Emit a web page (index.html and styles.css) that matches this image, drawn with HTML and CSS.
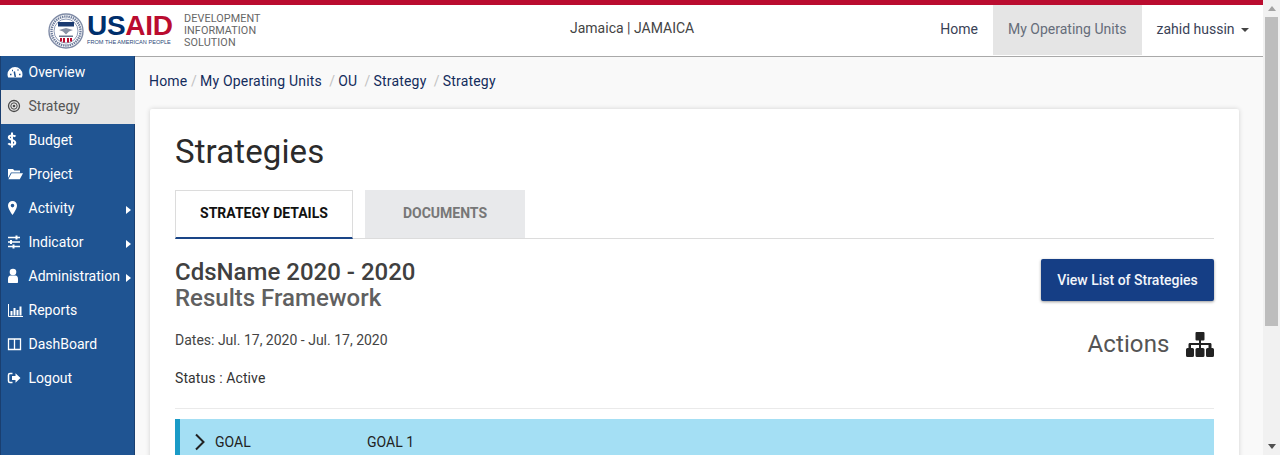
FILE: index.html
```html
<!DOCTYPE html>
<html lang="en">
<head>
<meta charset="utf-8">
<title>Strategies</title>
<link rel="stylesheet" href="styles.css">
</head>
<body>
<div class="window">
  <div class="page">
    <div class="topline"></div>
    <header class="header">
      <div class="brand">
        <svg class="seal" width="36" height="36" viewBox="0 0 36 36">
          <circle cx="18" cy="18" r="17" fill="#fff" stroke="#7f8ba6" stroke-width="1.4"/>
          <circle cx="18" cy="18" r="14.5" fill="none" stroke="#6d7c9c" stroke-width="2.4" stroke-dasharray="1.4 .8"/>
          <circle cx="18" cy="18" r="12" fill="#fff" stroke="#5f7096" stroke-width=".7"/>
          <rect x="10" y="9" width="16" height="4.500" fill="#1a3a70"/>
          <path d="M11 17l7-2 7 2-4 1.500-3 3-3-3z" fill="#8a93a6"/>
          <rect x="11" y="22.500" width="14" height="1.500" fill="#6a7892"/>
          <path fill="#ba0c2f" d="M12 25h2v3.500h-2zM15 25h2v4.500h-2zM19 25h2v4.500h-2zM22 25h2v3.500h-2z"/>
        </svg>
        <div class="wordmark">
          <div class="usaid"><span class="us">US</span><span class="aid">AID</span></div>
          <div class="tagline">FROM THE AMERICAN PEOPLE</div>
        </div>
        <div class="dis">DEVELOPMENT<br>INFORMATION<br>SOLUTION</div>
      </div>
      <div class="country">Jamaica | JAMAICA</div>
      <nav class="topnav">
        <a class="topnav-item">Home</a>
        <a class="topnav-item is-active">My Operating Units</a>
        <a class="topnav-item user">zahid hussin <span class="caret"></span></a>
      </nav>
    </header>
    <div class="body-row">
      <aside class="sidebar">
        <a class="side-item"><svg class="ico" viewBox="0 0 16 16"><path fill="#fff" d="M8 3a7.500 7.500 0 0 0-7.500 7.500c0 1 .2 2 .7 3h13.600c.5-1 .7-2 .7-3A7.500 7.500 0 0 0 8 3z"/><path stroke="#1f5492" stroke-width="1.500" d="M8.300 13 7.300 7.500M3 10.500h1.500M5 6.500h1M10.500 6h1M12 10.500h1.500"/></svg><span>Overview</span></a>
        <a class="side-item is-active"><svg class="ico" viewBox="0 0 16 16" fill="none" stroke="#4a4a4a"><circle cx="7" cy="8" r="5.500" stroke-width="1.300"/><circle cx="7" cy="8" r="3.200" stroke-width="1"/><circle cx="7" cy="8" r="1.300" fill="#4a4a4a" stroke="none"/></svg><span>Strategy</span></a>
        <a class="side-item"><svg class="ico" viewBox="0 0 16 16"><path fill="none" stroke="#fff" stroke-width="2" transform="translate(-3 0)" d="M11.500 4.500C10.500 3.300 5 2.500 4.800 5.200 4.600 8 11.300 7.700 11.300 10.700 11.300 13.500 5.500 13 4.300 11.300M8 .5v15"/></svg><span>Budget</span></a>
        <a class="side-item"><svg class="ico" viewBox="0 0 16 16"><path fill="#fff" d="M1 3h5l1.300 1.500H13V6.500H4L1 12zM4.500 7.300H16l-3.200 6H1.400z"/></svg><span>Project</span></a>
        <a class="side-item"><svg class="ico" viewBox="0 0 16 16"><path fill="#fff" fill-rule="evenodd" transform="translate(-2.500 0)" d="M8 1a4.500 4.500 0 0 0-4.500 4.500C3.500 9 8 15 8 15s4.500-6 4.500-9.500A4.500 4.500 0 0 0 8 1zm0 2.800a1.800 1.800 0 1 1 0 3.600A1.800 1.800 0 0 1 8 3.800z"/></svg><span>Activity</span><i class="arrow"></i></a>
        <a class="side-item"><svg class="ico" viewBox="0 0 16 16"><path stroke="#fff" stroke-width="1.300" d="M1 3.500h12M1 8h12M1 12.500h12"/><path fill="#fff" d="M8.500 1.500h2v4h-2zM3 6h2v4H3zM5.500 10.500h2v4h-2z"/></svg><span>Indicator</span><i class="arrow"></i></a>
        <a class="side-item"><svg class="ico" viewBox="0 0 16 16"><circle cx="6" cy="4" r="3.300" fill="#fff"/><path fill="#fff" d="M1 14v-3C1 8.800 2 7.500 3.500 7.500h5c1.500 0 2.500 1.300 2.500 3.500v3c0 .6-.4 1-1 1H2c-.6 0-1-.4-1-1z"/></svg><span>Administration</span><i class="arrow"></i></a>
        <a class="side-item"><svg class="ico" viewBox="0 0 16 16"><path fill="none" stroke="#fff" d="M1.500 2v12.500h15"/><path fill="#fff" d="M3.500 9h2v4.500h-2zM6.500 6h2v7.500h-2zM9.500 8h2v5.500h-2zM12.500 4.500h2v9h-2z"/></svg><span>Reports</span></a>
        <a class="side-item"><svg class="ico" viewBox="0 0 16 16" fill="none" stroke="#fff" stroke-width="1.300"><path d="M1.500 3h12v10.500h-12zM7.500 3v10.500"/></svg><span>DashBoard</span></a>
        <a class="side-item"><svg class="ico" viewBox="0 0 16 16"><path fill="none" stroke="#fff" stroke-width="1.500" d="M5.500 3.500H3C2 3.500 1.500 4 1.500 5v6c0 1 .5 1.500 1.500 1.500h2.500"/><path fill="#fff" d="M5 6h3.500V3.200L13.500 8l-5 4.800V10H5z"/></svg><span>Logout</span></a>
      </aside>
      <main class="main">
        <ol class="crumbs">
          <li>Home</li><li class="sep sep-first">/</li><li>My Operating Units</li><li class="sep">/</li><li>OU</li><li class="sep">/</li><li>Strategy</li><li class="sep">/</li><li>Strategy</li>
        </ol>
        <section class="card">
          <h1 class="title">Strategies</h1>
          <div class="tabs">
            <a class="tab is-active">STRATEGY DETAILS</a>
            <a class="tab">DOCUMENTS</a>
          </div>
          <div class="summary">
            <div class="summary-left">
              <h2 class="cds">CdsName 2020 - 2020</h2>
              <h3 class="rf">Results Framework</h3>
              <p class="dates">Dates: Jul. 17, 2020 - Jul. 17, 2020</p>
              <p class="status">Status : Active</p>
            </div>
            <div class="summary-right">
              <a class="btn">View List of Strategies</a>
              <div class="actions">
                <span>Actions</span>
                <svg width="28" height="25" viewBox="0 0 28 25"><path fill="#222" d="M10.500 0h7a1 1 0 0 1 1 1v6.500a1 1 0 0 1-1 1H15V11h9c1 0 1.500.5 1.500 1.500V16h1a1.500 1.500 0 0 1 1.500 1.500v6a1.500 1.500 0 0 1-1.500 1.500h-5a1.500 1.500 0 0 1-1.500-1.500v-6a1.500 1.500 0 0 1 1.500-1.500h1v-3H15v3h2a1.500 1.500 0 0 1 1.500 1.500v6a1.500 1.500 0 0 1-1.500 1.500h-6a1.500 1.500 0 0 1-1.500-1.500v-6A1.500 1.500 0 0 1 11 16h2v-3H5v3h1.500A1.500 1.500 0 0 1 8 17.500v6A1.500 1.500 0 0 1 6.500 25h-5A1.500 1.500 0 0 1 0 23.500v-6A1.500 1.500 0 0 1 1.500 16h1v-3.500C2.500 11.500 3 11 4 11h9V8.500h-2.500a1 1 0 0 1-1-1V1a1 1 0 0 1 1-1z"/></svg>
              </div>
            </div>
          </div>
          <div class="goal">
            <svg class="chev" width="12" height="18" viewBox="0 0 12 18"><path fill="none" stroke="#222" stroke-width="2" d="M2 1.500 9.500 9 2 16.500"/></svg>
            <span class="goal-label">GOAL</span>
            <span class="goal-name">GOAL 1</span>
          </div>
        </section>
      </main>
    </div>
  </div>
  <div class="scrollbar">
    <div class="sb-btn"><i class="sb-up"></i></div>
    <div class="sb-track"><div class="sb-thumb"></div></div>
    <div class="sb-btn"><i class="sb-down"></i></div>
  </div>
</div>
</body>
</html>
```

FILE: styles.css
```css
* { box-sizing: border-box; }
html, body { margin: 0; height: 100%; overflow: hidden; }
body { font-family: Roboto, "Liberation Sans", sans-serif; font-size: 14px; color: #333; background: #f9f9f9; }
a { color: inherit; text-decoration: none; }
.window { display: flex; height: 455px; }
.page { flex: 1; min-width: 0; display: flex; flex-direction: column; overflow: hidden; }

.topline { height: 5px; flex: none; background: #ba0c2f; }
.header { flex: none; height: 52px; display: flex; align-items: flex-start; background: #fff; border-bottom: 1px solid #a9a9a9; }
.brand { width: 520px; flex: none; display: flex; align-items: flex-start; padding: 7px 0 0 48px; }
.seal { flex: none; margin-top: 1px; }
.wordmark { margin-left: 3px; width: 85px; flex: none; }
.usaid { font-family: "Liberation Sans", sans-serif; font-weight: 700; font-size: 28px; line-height: 25px; letter-spacing: -.3px; height: 25px; margin-top: 1px; white-space: nowrap; }
.us { color: #002f6c; }
.aid { color: #ba0c2f; }
.tagline { font-family: "Liberation Sans", sans-serif; font-size: 5.600px; line-height: 8px; color: #2d4a78; white-space: nowrap; }
.dis { margin-left: 12px; font-size: 10.800px; line-height: 12px; color: #666; letter-spacing: .1px; padding-top: 1px; }
.country { flex: 1; padding: 15px 0 0 50px; color: #444; font-size: 14px; line-height: 16px; }
.topnav { display: flex; height: 50px; flex: none; }
.topnav-item { display: block; padding: 16px 15px 0; line-height: 17px; color: #3a4256; font-size: 14px; }
.topnav-item.is-active { background: #e5e5e5; color: #666d7a; height: 50px; padding-right: 16px; }
.topnav-item.user { padding-left: 14px; padding-right: 14px; }
.caret { display: inline-block; width: 0; height: 0; margin-left: 3px; vertical-align: 2px; border-top: 4px solid #444; border-left: 4px solid transparent; border-right: 4px solid transparent; }

.body-row { flex: 1; display: flex; min-height: 0; }
.sidebar { width: 135px; flex: none; margin-top: -1px; background: #1f5492; border-left: 1px solid #1a3f70; border-right: 1px solid #1a3f70; color: #fff; }
.side-item { display: flex; align-items: center; height: 34px; padding: 0 0 2px 6px; font-size: 14px; position: relative; white-space: nowrap; }
.side-item span { margin-left: 5.500px; }
.side-item.is-active { background: #e5e5e5; color: #555; margin-right: -1px; }
.ico { width: 16px; height: 16px; flex: none; }
.arrow { position: absolute; left: 125px; top: 14px; width: 0; height: 0; border-left: 5px solid #fff; border-top: 4.500px solid transparent; border-bottom: 4.500px solid transparent; }

.main { flex: 1; min-width: 0; padding: 0 24px 0 15px; }
.crumbs { list-style: none; display: flex; margin: 0 0 0 -1px; padding: 16px 0 0; height: 52px; line-height: 17px; font-size: 14px; letter-spacing: .2px; color: #132c5c; }
.crumbs .sep { color: #c2c2c2; margin: 0 3px 0 7.200px; }
.crumbs .sep-first { margin: 0 3px 0 3.500px; }
.card { height: 400px; background: #fff; padding: 23px 25px 0; box-shadow: 0 0 5px rgba(0, 0, 0, .16); border-radius: 2px; }
.title { margin: 0; font-weight: 400; font-size: 33px; line-height: 39px; color: #2b2b2b; letter-spacing: .1px; }
.tabs { display: flex; gap: 12px; margin-top: 19px; height: 49px; border-bottom: 1px solid #dcdcdc; }
.tab { display: flex; align-items: center; justify-content: center; height: 48px; background: #e8e9eb; color: #777; font-weight: 700; font-size: 14px; width: 160px; padding-bottom: 2px; }
.tab.is-active { width: 178px; background: #fff; color: #111; border: 1px solid #dcdcdc; border-bottom: 2px solid #1a4587; height: 49px; }
.summary { display: flex; justify-content: space-between; height: 170px; border-bottom: 1px solid #eaeaea; }
.cds { margin: 20px 0 0; font-weight: 500; font-size: 24px; line-height: 26px; color: #404040; }
.rf { margin: 0; font-weight: 500; font-size: 24px; line-height: 26px; color: #606060; }
.dates { margin: 21px 0 0; font-size: 14px; line-height: 17px; color: #444; }
.status { margin: 21px 0 0; font-size: 14px; line-height: 17px; letter-spacing: .1px; color: #333; }
.summary-right { display: flex; flex-direction: column; align-items: flex-end; padding-top: 20px; }
.btn { display: flex; align-items: center; justify-content: center; width: 173px; height: 42px; background: #153e85; color: #f2f5fa; font-weight: 500; font-size: 14px; border-radius: 2px; box-shadow: 0 1px 3px rgba(0, 0, 0, .4); }
.actions { display: flex; align-items: center; gap: 16.500px; margin-top: 29px; font-size: 24px; line-height: 28px; color: #555; letter-spacing: .1px; }
.goal { display: flex; align-items: center; margin-top: 10px; height: 46px; background: #a4dff4; border-left: 5px solid #1a9bc7; color: #222; padding-left: 14px; font-size: 14px; }
.chev { flex: none; }
.goal-label { margin-left: 9px; width: 152px; }

.scrollbar { width: 17px; flex: none; display: flex; flex-direction: column; background: #f1f1f1; }
.sb-btn { height: 17px; flex: none; display: flex; align-items: center; justify-content: center; }
.sb-up { width: 0; height: 0; border-bottom: 5px solid #a3a3a3; border-left: 4.500px solid transparent; border-right: 4.500px solid transparent; }
.sb-down { width: 0; height: 0; border-top: 5px solid #505050; border-left: 4.500px solid transparent; border-right: 4.500px solid transparent; }
.sb-track { flex: 1; padding: 0 2px; }
.sb-thumb { height: 309px; background: #bdbdbd; }
```
